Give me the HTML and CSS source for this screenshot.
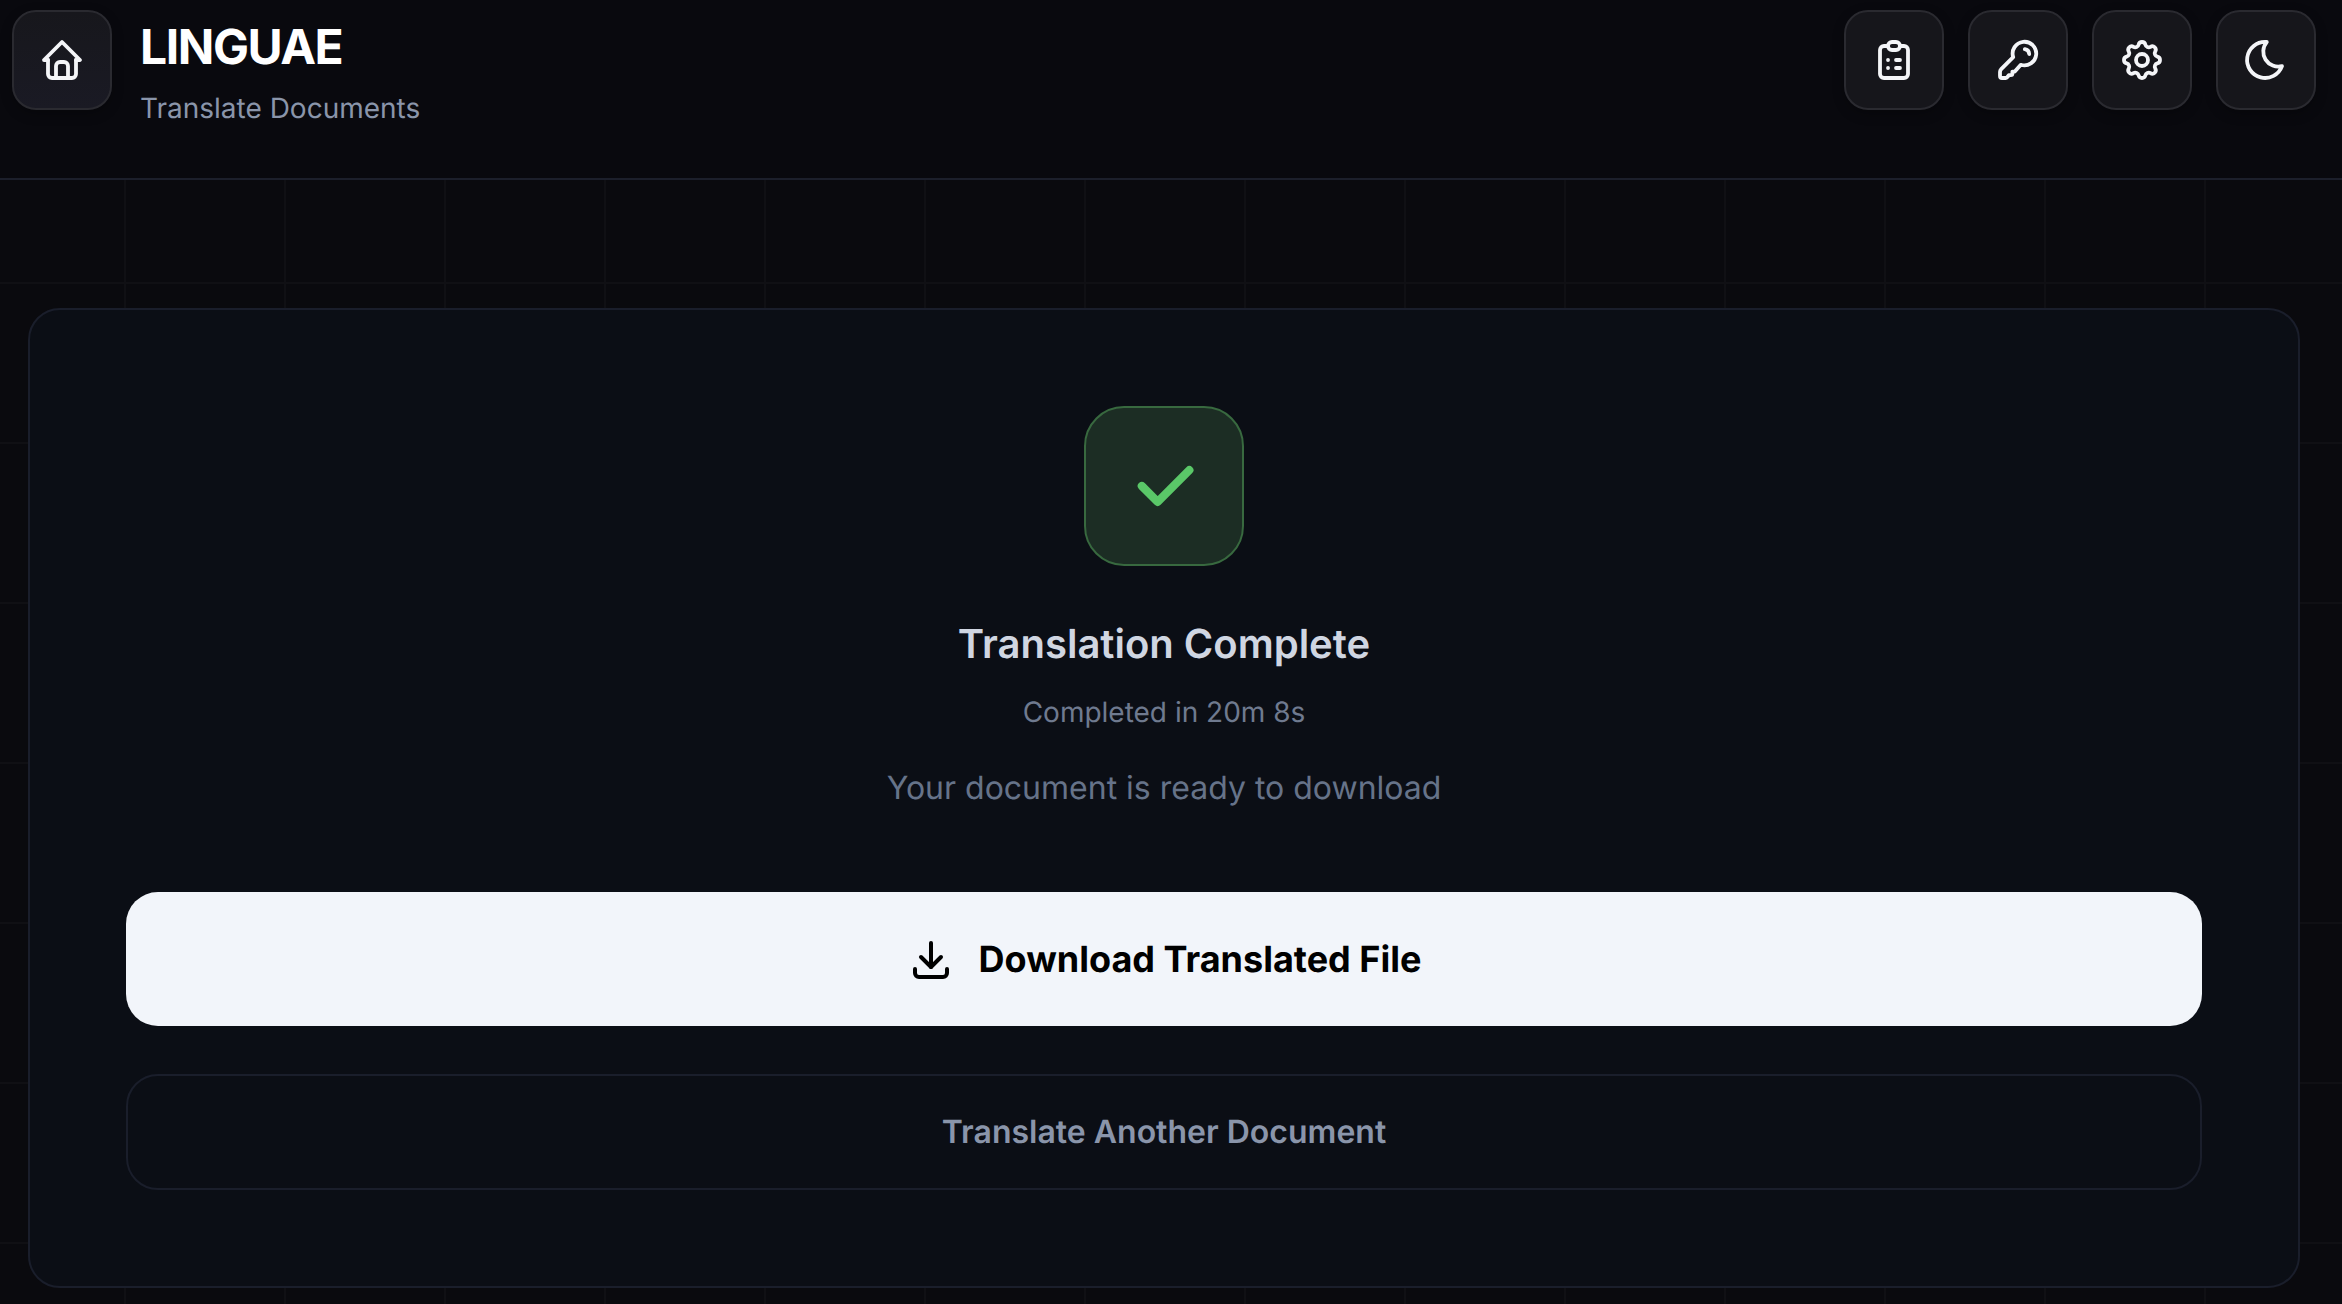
FILE: index.html
```html
<!DOCTYPE html>
<html lang="en">
<head>
<meta charset="utf-8">
<title>Linguae</title>
<link rel="stylesheet" href="styles.css">
</head>
<body>
<header class="topbar">
  <div class="brand">
    <button class="icon-btn home-btn" aria-label="Home">
      <svg class="icon" viewBox="0 0 24 24"><path d="M5 12h-2l9 -9l9 9h-2"/><path d="M5 12v7a2 2 0 0 0 2 2h10a2 2 0 0 0 2 -2v-7"/><path d="M9 21v-6a2 2 0 0 1 2 -2h2a2 2 0 0 1 2 2v6"/></svg>
    </button>
    <div class="brand-text">
      <div class="brand-title">LINGUAE</div>
      <div class="brand-sub">Translate Documents</div>
    </div>
  </div>
  <nav class="actions">
    <button class="icon-btn" aria-label="Activity">
      <svg class="icon" viewBox="0 0 24 24"><path d="M9 5h-2a2 2 0 0 0 -2 2v12a2 2 0 0 0 2 2h10a2 2 0 0 0 2 -2v-12a2 2 0 0 0 -2 -2h-2"/><path d="M9 5a2 2 0 0 1 2 -2h2a2 2 0 0 1 2 2v0a2 2 0 0 1 -2 2h-2a2 2 0 0 1 -2 -2z"/><path d="M9 12h.01"/><path d="M13 12h2"/><path d="M9 16h.01"/><path d="M13 16h2"/></svg>
    </button>
    <button class="icon-btn" aria-label="API keys">
      <svg class="icon" viewBox="0 0 24 24"><path d="M9.6 10.6L3.6 16.6q-.6 .6 -.6 1.4V20a1 1 0 0 0 1 1h1.8a1 1 0 0 0 .8 -.4l.8 -1h1a.8 .8 0 0 0 .8 -.8v-1h1.2L13.4 14.4A5.9 5.9 0 1 0 9.6 10.6z"/><path d="M15.4 6.6a2.6 2.6 0 0 1 2.2 2.4"/></svg>
    </button>
    <button class="icon-btn" aria-label="Settings">
      <svg class="icon" viewBox="0 0 24 24"><path d="M10.325 4.317c.426 -1.756 2.924 -1.756 3.35 0a1.724 1.724 0 0 0 2.573 1.066c1.543 -.94 3.31 .826 2.37 2.37a1.724 1.724 0 0 0 1.065 2.572c1.756 .426 1.756 2.924 0 3.35a1.724 1.724 0 0 0 -1.066 2.573c.94 1.543 -.826 3.31 -2.37 2.37a1.724 1.724 0 0 0 -2.572 1.065c-.426 1.756 -2.924 1.756 -3.35 0a1.724 1.724 0 0 0 -2.573 -1.066c-1.543 .94 -3.31 -.826 -2.37 -2.37a1.724 1.724 0 0 0 -1.065 -2.572c-1.756 -.426 -1.756 -2.924 0 -3.35a1.724 1.724 0 0 0 1.066 -2.573c-.94 -1.543 .826 -3.31 2.37 -2.37c1 .608 2.296 .07 2.572 -1.065z"/><path d="M9 12a3 3 0 1 0 6 0a3 3 0 0 0 -6 0"/></svg>
    </button>
    <button class="icon-btn" aria-label="Theme">
      <svg class="icon" viewBox="0 0 24 24"><path d="M12 3c.132 0 .263 0 .393 0a7.5 7.5 0 0 0 7.607 12.086a9 9 0 1 1 -8 -12.087z"/></svg>
    </button>
  </nav>
</header>
<main class="content">
  <section class="card">
    <div class="status-icon">
      <svg class="check" viewBox="0 0 24 24"><path d="M5 12l5 5l10 -10"/></svg>
    </div>
    <h1 class="status-title">Translation Complete</h1>
    <p class="status-time">Completed in 20m 8s</p>
    <p class="status-note">Your document is ready to download</p>
    <button class="btn-primary">
      <svg class="btn-icon" viewBox="0 0 24 24"><path d="M4 17v2a2 2 0 0 0 2 2h12a2 2 0 0 0 2 -2v-2"/><path d="M7 11l5 5l5 -5"/><path d="M12 4v12"/></svg>
      <span>Download Translated File</span>
    </button>
    <button class="btn-secondary">Translate Another Document</button>
  </section>
</main>
</body>
</html>
```
FILE: styles.css
```css
* { box-sizing: border-box; }
html, body { margin: 0; height: 100%; }
body {
  overflow: hidden;
  font-family: Inter, "Liberation Sans", sans-serif;
  text-rendering: geometricPrecision;
  background-color: #0a0a0e;
  background-image:
    linear-gradient(#101014 2px, transparent 2px),
    linear-gradient(90deg, #101014 2px, transparent 2px);
  background-size: 160px 160px;
  background-position: 124px 122px;
}
button { font-family: inherit; text-rendering: inherit; cursor: pointer; }

.topbar {
  height: 180px;
  display: flex;
  justify-content: space-between;
  align-items: flex-start;
  padding: 10px 26px 0 12px;
  background: #09090e;
  border-bottom: 2px solid #1c1f2b;
}
.brand { display: flex; gap: 28px; align-items: flex-start; }
.icon-btn {
  width: 100px;
  height: 100px;
  padding: 0;
  display: flex;
  align-items: center;
  justify-content: center;
  border-radius: 24px;
  border: 2px solid #2a2a30;
  background: #16161b;
  box-shadow: 0 4px 12px rgba(0, 0, 0, .25);
}
.home-btn { background: linear-gradient(180deg, #17171c, #1a1a24); }
.icon {
  width: 48px;
  height: 48px;
  fill: none;
  stroke: #f4f5f8;
  stroke-width: 1.9;
  stroke-linecap: round;
  stroke-linejoin: round;
}
.brand-title {
  font-size: 48px;
  font-weight: 700;
  line-height: 56px;
  letter-spacing: -1.44px;
  font-variation-settings: "opsz" 32;
  color: #fff;
  margin-top: 9px;
}
.brand-sub {
  font-size: 28px;
  line-height: 40px;
  color: #8a95aa;
  margin-top: 13px;
}
.actions { display: flex; gap: 24px; }

.content { padding: 128px 42px 16px 28px; }
.card {
  height: 980px;
  padding: 96px;
  display: flex;
  flex-direction: column;
  align-items: center;
  background: #0b0e15;
  border: 2px solid #1a1e2b;
  border-radius: 32px;
}
.status-icon {
  flex: none;
  width: 160px;
  height: 160px;
  display: flex;
  align-items: center;
  justify-content: center;
  background: #1c2d24;
  border: 2px solid #38693f;
  border-radius: 40px;
}
.check {
  width: 76px;
  height: 76px;
  fill: none;
  stroke: #5ac768;
  stroke-width: 2.6;
  stroke-linecap: round;
  stroke-linejoin: round;
}
.status-title {
  margin: 50px 0 0;
  font-size: 40px;
  font-weight: 600;
  line-height: 56px;
  color: #d0d6e2;
}
.status-time {
  margin: 20px 0 0;
  font-size: 28px;
  line-height: 40px;
  color: #6f7a8f;
}
.status-note {
  margin: 34px 0 0;
  font-size: 32px;
  line-height: 44px;
  color: #667389;
}
.btn-primary {
  flex: none;
  width: 100%;
  height: 134px;
  margin-top: 82px;
  display: flex;
  align-items: center;
  justify-content: center;
  gap: 24px;
  border: 0;
  border-radius: 32px;
  background: #f2f5fa;
  color: #000;
  font-size: 36px;
  font-weight: 700;
}
.btn-icon {
  width: 48px;
  height: 48px;
  fill: none;
  stroke: #000;
  stroke-width: 2;
  stroke-linecap: round;
  stroke-linejoin: round;
}
.btn-secondary {
  flex: none;
  width: 100%;
  height: 116px;
  margin-top: 48px;
  padding-bottom: 2px;
  border: 2px solid #1a1e2b;
  border-radius: 32px;
  background: transparent;
  color: #8a95aa;
  font-size: 32px;
  font-weight: 600;
}
```
